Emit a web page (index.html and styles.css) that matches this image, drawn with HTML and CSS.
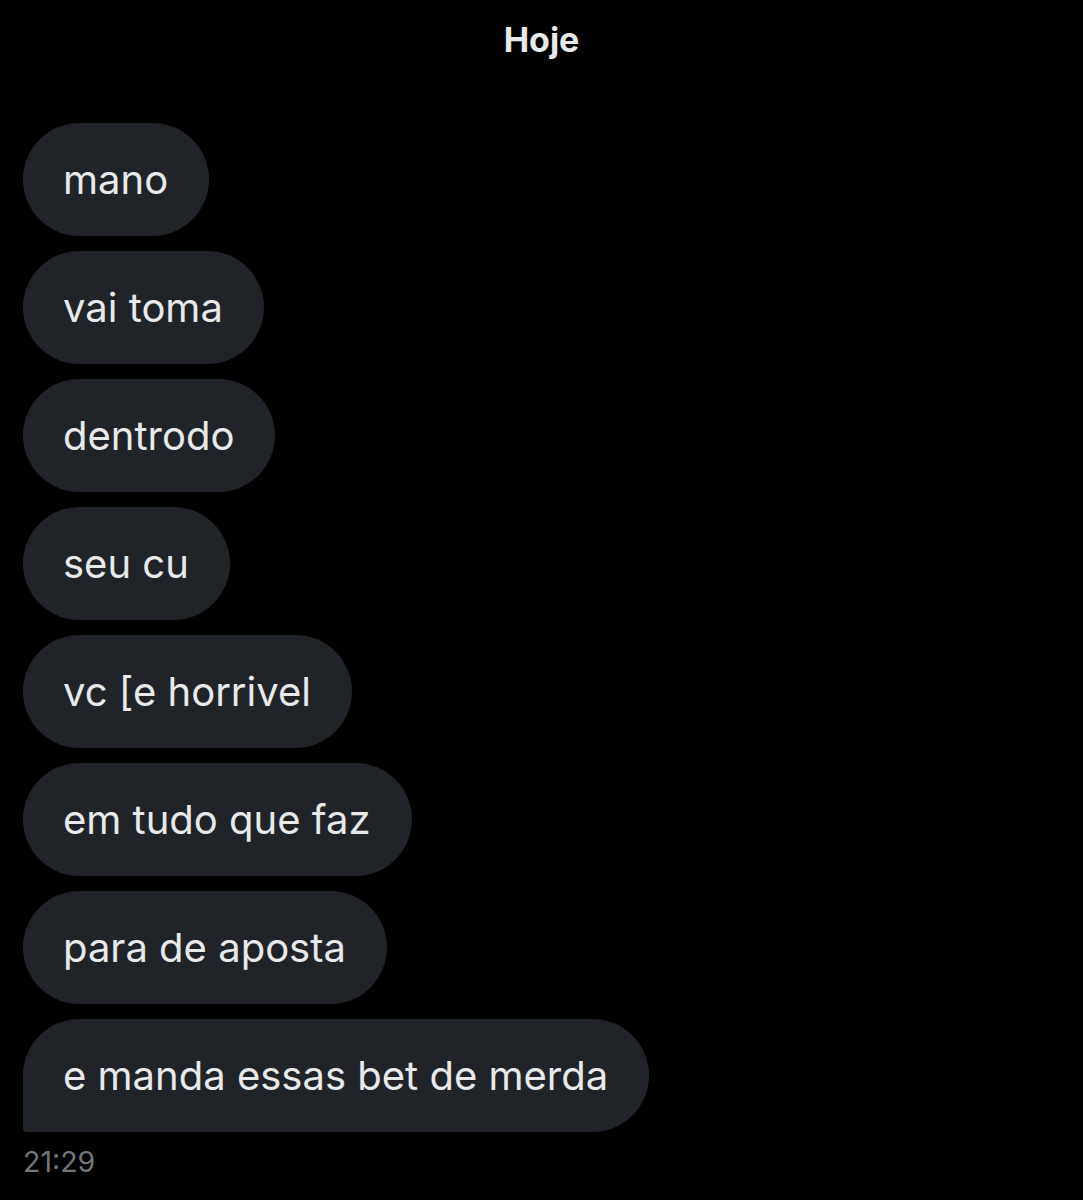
FILE: index.html
```html
<!DOCTYPE html>
<html>

<head>
  <title>Mensagens</title>
  <link rel="stylesheet" href="styles.css">
</head>

<body>
  <!-- Date separator -->
  <div class="day-header">Hoje</div>

  <!-- Received messages -->
  <div class="thread">
    <div class="bubble">mano</div>
    <div class="bubble">vai toma</div>
    <div class="bubble">dentrodo</div>
    <div class="bubble">seu cu</div>
    <div class="bubble">vc [e horrivel</div>
    <div class="bubble">em tudo que faz</div>
    <div class="bubble">para de aposta</div>
    <div class="bubble last">e manda essas bet de merda</div>
    <div class="time">21:29</div>
  </div>
</body>

</html>
```
FILE: styles.css
```css
/* Global Styles */
body {
  margin: 0;
  background-color: #000000;
  font-family: Inter, "Noto Sans", sans-serif;
  color: #e7e9ea;
}

/* Day header */
.day-header {
  text-align: center;
  font-weight: bold;
  font-size: 34px;
  line-height: 40px;
  padding-top: 20px;
  height: 60px;
}

/* Message list */
.thread {
  display: flex;
  flex-direction: column;
  align-items: flex-start;
  gap: 15px;
  padding: 43px 23px 0;
}

.bubble {
  background-color: #202327;
  border-radius: 57px;
  font-size: 40px;
  line-height: 49px;
  padding: 32px 41px 32px 40px;
}

.bubble.last {
  border-bottom-left-radius: 4px;
}

.time {
  margin-top: -3px;
  font-size: 28.5px;
  color: #71767b;
}
```
